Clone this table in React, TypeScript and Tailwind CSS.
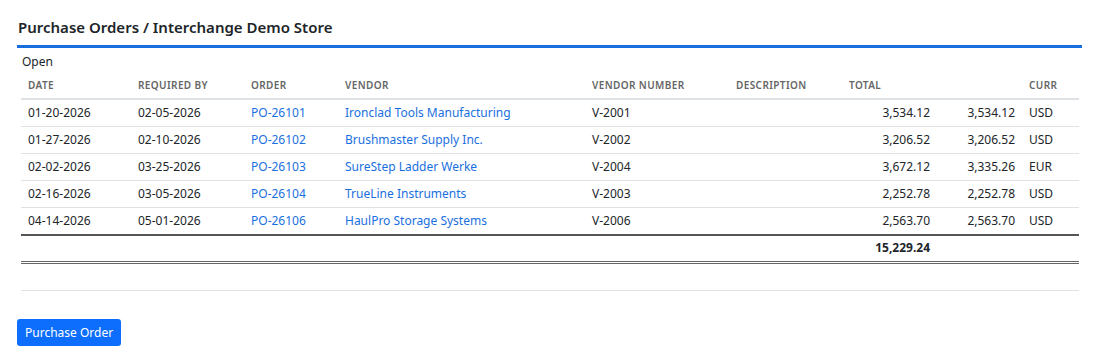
import React from "react";

const rows = [
  ["01-20-2026", "02-05-2026", "PO-26101", "Ironclad Tools Manufacturing", "V-2001", "", "3,534.12", "3,534.12", "USD"],
  ["01-27-2026", "02-10-2026", "PO-26102", "Brushmaster Supply Inc.", "V-2002", "", "3,206.52", "3,206.52", "USD"],
  ["02-02-2026", "03-25-2026", "PO-26103", "SureStep Ladder Werke", "V-2004", "", "3,672.12", "3,335.26", "EUR"],
  ["02-16-2026", "03-05-2026", "PO-26104", "TrueLine Instruments", "V-2003", "", "2,252.78", "2,252.78", "USD"],
  ["04-14-2026", "05-01-2026", "PO-26106", "HaulPro Storage Systems", "V-2006", "", "2,563.70", "2,563.70", "USD"],
];

const widths = ["w-[110px]", "w-[113px]", "w-[94px]", "w-[247px]", "w-[144px]", "w-[113px]", "w-[95px]", "w-[85px]", ""];

export default function App() {
  return (
    <div className="w-[1100px] h-[364px] bg-white text-[#212529] pl-[17px] pr-[18px] pt-[16px]" style={{ fontFamily: '"Noto Sans", "Open Sans", sans-serif' }}>
      <h1 className="text-[15px] font-semibold leading-[22px] pb-[7px] pl-[1px] border-b-[3px] border-[#1a6fe0]">
        Purchase Orders / Interchange Demo Store
      </h1>
      <div className="pl-[4px] pr-[3px]">
        <div className="text-[12px] leading-[18px] pt-[5px] pl-[1px]">Open</div>
        <table className="w-full border-collapse text-[12px] mt-[1px]">
          <thead>
            <tr className="border-b-2 border-[#dee2e6]">
              {["Date", "Required By", "Order", "Vendor", "Vendor Number", "Description", "Total", "", "Curr"].map((h, i) => (
                <th key={i} className={`${widths[i]} text-left px-[7px] h-[27px] text-[10px] font-semibold uppercase tracking-[0.04em] text-[#666] align-middle`}>
                  {h}
                </th>
              ))}
            </tr>
          </thead>
          <tbody>
            {rows.map((r, ri) => (
              <tr key={ri} className={ri === rows.length - 1 ? "border-b-2 border-[#555]" : "border-b border-[#dee2e6]"}>
                {r.map((c, i) => (
                  <td
                    key={i}
                    className={`px-[7px] ${ri === rows.length - 1 ? "h-[28px]" : "h-[27px]"} align-middle ${i === 6 || i === 7 ? "text-right" : "text-left"} ${i === 2 || i === 3 ? "text-[#1a6fe0]" : ""}`}
                  >
                    {c}
                  </td>
                ))}
              </tr>
            ))}
            <tr className="border-b-[3px] border-double border-[#666]">
              <td colSpan={6} className="h-[27px]"></td>
              <td className="px-[7px] text-right font-bold">15,229.24</td>
              <td colSpan={2}></td>
            </tr>
          </tbody>
        </table>
        <div className="mt-[26px] border-b border-[#dee2e6]"></div>
      </div>
      <button className="mt-[28px] bg-[#0d6efd] text-white text-[12px] leading-[17px] px-[8px] py-[5px] rounded-[3px]">
        Purchase Order
      </button>
    </div>
  );
}
